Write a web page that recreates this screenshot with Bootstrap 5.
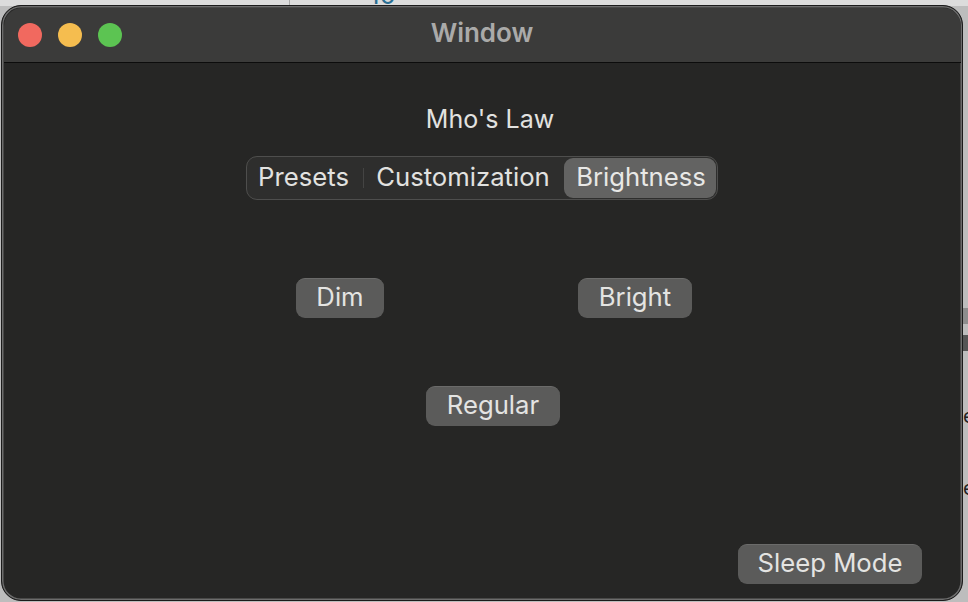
<!doctype html>
<html lang="en">
<head>
<meta charset="utf-8">
<title>Window</title>
<link rel="stylesheet" href="https://cdn.jsdelivr.net/npm/bootstrap@5.3.0/dist/css/bootstrap.min.css">
<style>
html,body{height:602px;overflow:hidden}
body{background:#bdbdbd;font-family:Inter,"Liberation Sans",sans-serif;position:relative}
.desk-top{position:absolute;left:0;top:0;width:100%;height:6px;background:#dcdcdc}
.desk-line{position:absolute;left:289px;top:0;width:1px;height:6px;background:#a9a9a9}
.desk-frag{position:absolute;left:369px;top:-18px;font-size:26px;line-height:26px;color:#2a6f93}
.desk-r1{position:absolute;left:963px;top:308px;width:5px;height:16px;background:#8d8d8d}
.desk-r2{position:absolute;left:963px;top:335px;width:5px;height:16px;background:#555}
.desk-t{position:absolute;left:963px;font-size:20px;line-height:20px;color:#222}
.wnd{position:absolute;left:1px;top:5px;width:962px;height:596px;background:#262625;border-radius:20px;border:1px solid #1b1b1b;box-shadow:inset 0 0 0 1.5px #6c6c6c;overflow:hidden;display:flex;flex-direction:column}
.wnd-bar{height:55px;flex:none;background:#3b3b3a;border-bottom:1.5px solid #0c0c0c;padding-left:14px;position:relative;margin:1.5px 1.5px 0;border-radius:18px 18px 0 0}
.light{width:24px;height:24px;border-radius:50%}
.wnd-title{position:absolute;left:0;right:0;top:0;line-height:49px;text-align:center;font-size:26px;font-weight:600;color:#aaaaa9}
.wnd-body{flex:1;display:flex;flex-direction:column;color:#e2e2e0;font-size:25px}
.law{margin-top:38px;padding-left:16px;line-height:36px;text-align:center;height:36px;color:#e2e2e0}
.seg{margin-top:19px;margin-left:244px;width:472px;height:44px;border:1.5px solid #4e4e4d;border-radius:11px;background:#2e2e2d;padding:1px 1px 1px 0}
.seg-item{line-height:38px;height:40px;color:#e2e2e0;text-align:center;font-size:25.7px}
.seg-first{width:116px;padding-right:3px}
.seg-mid{width:198px}
.seg-sep{width:1px;height:20px;background:#444443;align-self:center}
.seg-on{background:#636362;border-radius:9px;color:#e8e8e6;margin-left:2px;width:152px;padding-left:2px}
.pill{display:block;height:40px;padding:0 0 4px;border:0;border-top:1px solid #6b6b6a;border-radius:9px;background:#5b5b5a;color:#e4e4e2;font-size:25.7px;line-height:35px;text-align:center}
.pill:hover,.pill:active,.pill:focus{background:#5b5b5a;color:#e4e4e2}
.row-a{margin-top:78px;padding-left:294px;gap:194px}
.row-b{margin-top:68px;padding-left:424px}
.row-c{margin-top:118px;padding-left:736px}
.w-dim{width:88px}
.w-bright{width:114px}
.w-regular{width:134px}
.w-sleep{width:184px}
.t1{top:406px}
.t2{top:478px}
.l-red{background:#f1695f}
.l-yellow{background:#f5bd4f}
.l-green{background:#5cc452}
</style>
</head>
<body>
<div class="desk-top"></div><div class="desk-line"></div><div class="desk-frag">10</div>
<div class="desk-r1"></div><div class="desk-r2"></div>
<div class="desk-t t1">e</div><div class="desk-t t2">e</div>
<div class="wnd">
  <div class="wnd-bar d-flex align-items-center gap-3">
    <div class="light l-red"></div>
    <div class="light l-yellow"></div>
    <div class="light l-green"></div>
    <div class="wnd-title">Window</div>
  </div>
  <div class="wnd-body">
    <div class="law">Mho's Law</div>
    <div class="seg d-flex align-items-center">
      <div class="seg-item seg-first">Presets</div>
      <div class="seg-sep"></div>
      <div class="seg-item seg-mid">Customization</div>
      <div class="seg-item seg-on">Brightness</div>
    </div>
    <div class="d-flex row-a">
      <button class="btn pill w-dim">Dim</button>
      <button class="btn pill w-bright">Bright</button>
    </div>
    <div class="d-flex row-b">
      <button class="btn pill w-regular">Regular</button>
    </div>
    <div class="d-flex row-c">
      <button class="btn pill w-sleep">Sleep Mode</button>
    </div>
  </div>
</div>
<script src="https://cdn.jsdelivr.net/npm/bootstrap@5.3.0/dist/js/bootstrap.bundle.min.js"></script>
</body>
</html>
